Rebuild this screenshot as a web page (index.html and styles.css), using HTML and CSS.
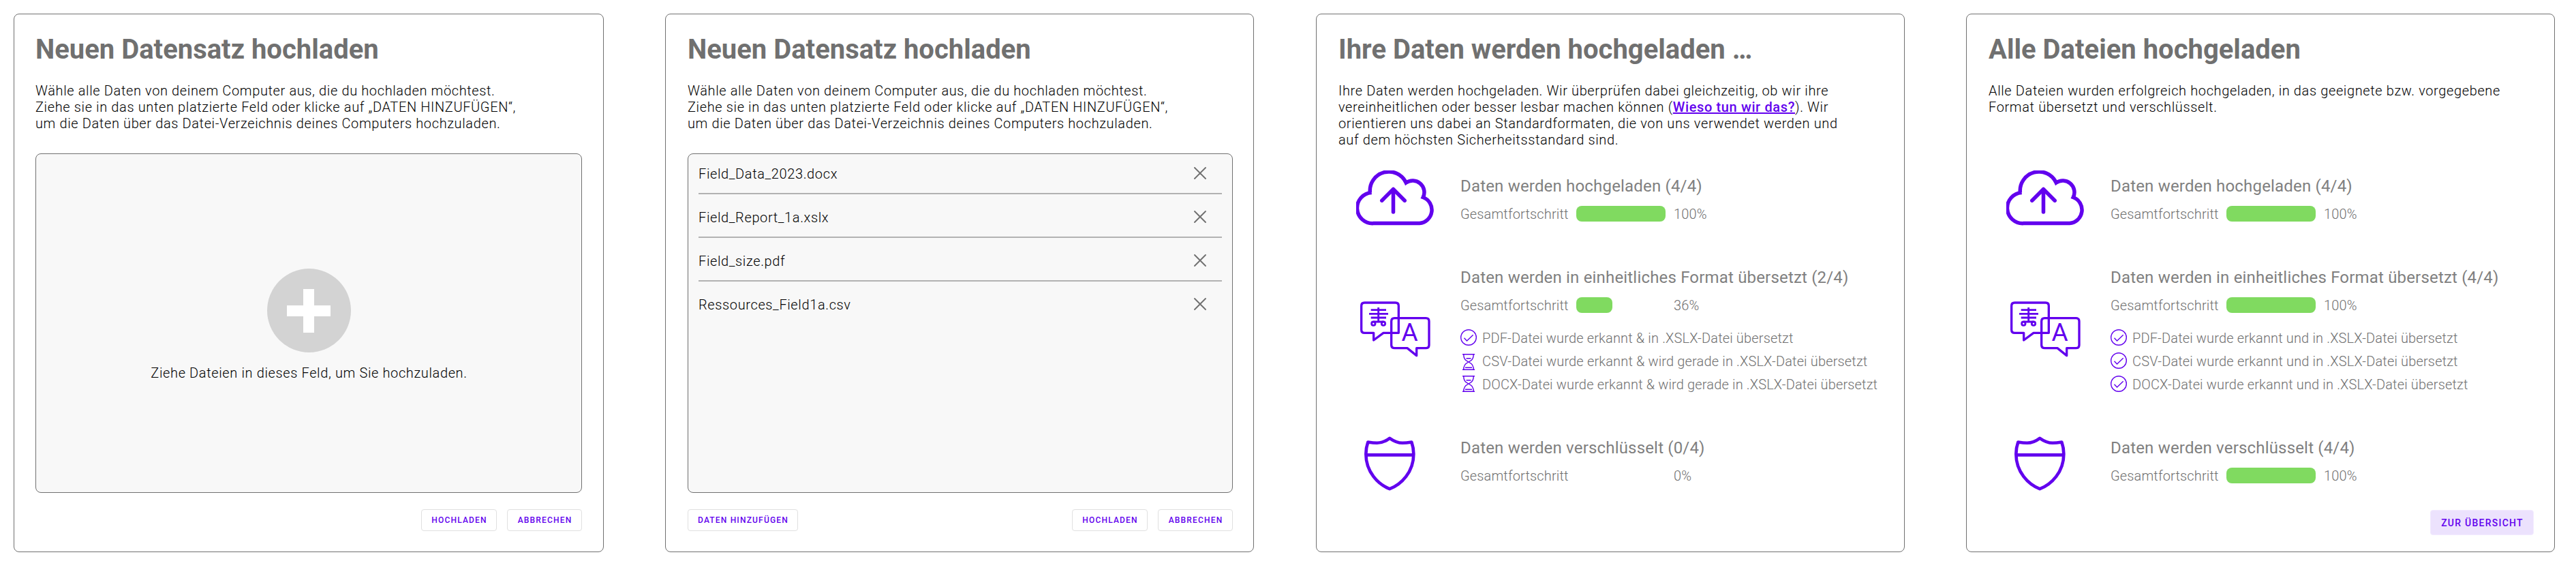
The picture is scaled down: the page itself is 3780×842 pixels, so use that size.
FILE: index.html
```
<!DOCTYPE html>
<html lang="de">
<head>
<meta charset="utf-8">
<title>Datensatz hochladen</title>
<link rel="stylesheet" href="styles.css">
</head>
<body>
<svg class="sprite" aria-hidden="true">
  <symbol id="close" viewBox="0 0 24 24"><path d="M4 3 20 19M20 3 4 19" fill="none" stroke="currentColor" stroke-width="1.9" stroke-linecap="round"/></symbol>
  <symbol id="cloud" viewBox="0 0 344 242">
    <g fill="none" stroke="currentColor" stroke-width="16.5">
      <path d="M61 97A83 83 0 0 1 219 54A51 51 0 0 1 294 118A59 59 0 0 1 278 232H76A67.5 67.5 0 0 1 68 97"/>
      <path d="M163 182V83M113 132 163 82 213 132" stroke-linecap="round" stroke-linejoin="round"/>
    </g>
  </symbol>
  <symbol id="translate" viewBox="0 0 309 246">
    <g fill="none" stroke="currentColor" stroke-width="10">
      <path d="M19 6H155Q169 6 169 20V139H102L59 171V139H19Q5 139 5 125V20Q5 6 19 6Z" stroke-linejoin="round"/>
      <path d="M151 74H289Q303 74 303 88V192Q303 206 289 206H248V239L207 206H151Q137 206 137 192V88Q137 74 151 74Z" stroke-linejoin="round"/>
      <g stroke-width="8.5"><path d="M80 27V90M47 38H114M39 55H123M47 72H114M58 90H103"/><circle cx="58" cy="98" r="8"/><circle cx="102" cy="98" r="8"/></g>
    </g>
    <text x="218" y="174" text-anchor="middle" font-size="111" fill="currentColor">A</text>
  </symbol>
  <symbol id="shield" viewBox="0 0 226 240">
    <path d="M112 8C96 20 78 29 56 29C40 29 28 27 16 25C10 42 7 60 7 78C7 158 62 213 112 232C163 213 218 158 218 78C218 60 215 42 209 25C197 27 185 29 169 29C147 29 129 20 112 8ZM7 82H218" fill="none" stroke="currentColor" stroke-width="14" stroke-linejoin="round"/>
  </symbol>
  <symbol id="check" viewBox="0 0 24 24"><g fill="none" stroke="currentColor" stroke-width="1.4"><circle cx="12" cy="12" r="11.3"/><path d="M5.5 12.8 9.5 17 18.7 8.3"/></g></symbol>
  <symbol id="hourglass" viewBox="0 0 18 24"><path d="M0 .7H18M0 23.3H18M1.7 .7C1.7 6 4 9.6 7.6 11.2Q9 12 7.6 12.8C4 14.4 1.7 18 1.7 23.3M16.3 .7C16.3 6 14 9.6 10.4 11.2Q9 12 10.4 12.8C14 14.4 16.3 18 16.3 23.3M5.5 6.7H12.5M4 20.3H14M7.6 12H10.4" fill="none" stroke="currentColor" stroke-width="1.4"/></symbol>
</svg>

<main class="board">
  <section class="card card-wide">
    <header class="head">
      <h1>Neuen Datensatz hochladen</h1>
      <p>Wähle alle Daten von deinem Computer aus, die du hochladen möchtest.<br>Ziehe sie in das unten platzierte Feld oder klicke auf „DATEN HINZUFÜGEN“,<br>um die Daten über das Datei-Verzeichnis deines Computers hochzuladen.</p>
    </header>
    <div class="panel drop">
      <svg class="plus" viewBox="0 0 123 123"><circle cx="61.5" cy="61.5" r="61.5" fill="#d3d3d3"/><path d="M53 30H69V54H93V70H69V94H53V70H29V54H53Z" fill="#fff"/></svg>
      <span class="hint">Ziehe Dateien in dieses Feld, um Sie hochzuladen.</span>
    </div>
    <footer class="actions">
      <button class="btn btn-upload push">HOCHLADEN</button>
      <button class="btn btn-cancel">ABBRECHEN</button>
    </footer>
  </section>

  <section class="card">
    <header class="head">
      <h1>Neuen Datensatz hochladen</h1>
      <p>Wähle alle Daten von deinem Computer aus, die du hochladen möchtest.<br>Ziehe sie in das unten platzierte Feld oder klicke auf „DATEN HINZUFÜGEN“,<br>um die Daten über das Datei-Verzeichnis deines Computers hochzuladen.</p>
    </header>
    <ul class="panel files">
      <li>Field_Data_2023.docx<svg class="close"><use href="#close"/></svg></li>
      <li>Field_Report_1a.xslx<svg class="close"><use href="#close"/></svg></li>
      <li>Field_size.pdf<svg class="close"><use href="#close"/></svg></li>
      <li>Ressources_Field1a.csv<svg class="close"><use href="#close"/></svg></li>
    </ul>
    <footer class="actions">
      <button class="btn btn-add">DATEN HINZUFÜGEN</button>
      <button class="btn btn-upload push">HOCHLADEN</button>
      <button class="btn btn-cancel">ABBRECHEN</button>
    </footer>
  </section>

  <section class="card">
    <header class="head head-steps">
      <h1>Ihre Daten werden hochgeladen …</h1>
      <p>Ihre Daten werden hochgeladen. Wir überprüfen dabei gleichzeitig, ob wir ihre<br>vereinheitlichen oder besser lesbar machen können (<a href="#">Wieso tun wir das?</a>). Wir<br>orientieren uns dabei an Standardformaten, die von uns verwendet werden und<br>auf dem höchsten Sicherheitsstandard sind.</p>
    </header>
    <div class="step step-upload">
      <svg class="cloud"><use href="#cloud"/></svg>
      <div class="body">
        <h2>Daten werden hochgeladen (4/4)</h2>
        <div class="progress"><span class="label">Gesamtfortschritt</span><span class="track"><span class="bar" style="width:100%"></span></span><span>100%</span></div>
      </div>
    </div>
    <div class="step step-format">
      <svg class="translate"><use href="#translate"/></svg>
      <div class="body">
        <h2>Daten werden in einheitliches Format übersetzt (2/4)</h2>
        <div class="progress"><span class="label">Gesamtfortschritt</span><span class="track"><span class="bar" style="width:40.5%"></span></span><span>36%</span></div>
        <ul class="states">
          <li><svg class="check"><use href="#check"/></svg>PDF-Datei wurde erkannt &amp; in .XSLX-Datei übersetzt</li>
          <li><svg class="hourglass"><use href="#hourglass"/></svg>CSV-Datei wurde erkannt &amp; wird gerade in .XSLX-Datei übersetzt</li>
          <li><svg class="hourglass raised"><use href="#hourglass"/></svg>DOCX-Datei wurde erkannt &amp; wird gerade in .XSLX-Datei übersetzt</li>
        </ul>
      </div>
    </div>
    <div class="step step-encrypt">
      <svg class="shield"><use href="#shield"/></svg>
      <div class="body">
        <h2>Daten werden verschlüsselt (0/4)</h2>
        <div class="progress"><span class="label">Gesamtfortschritt</span><span class="track"></span><span>0%</span></div>
      </div>
    </div>
  </section>

  <section class="card">
    <header class="head head-steps">
      <h1>Alle Dateien hochgeladen</h1>
      <p>Alle Dateien wurden erfolgreich hochgeladen, in das geeignete bzw. vorgegebene<br>Format übersetzt und verschlüsselt.</p>
    </header>
    <div class="step step-upload">
      <svg class="cloud"><use href="#cloud"/></svg>
      <div class="body">
        <h2>Daten werden hochgeladen (4/4)</h2>
        <div class="progress"><span class="label">Gesamtfortschritt</span><span class="track"><span class="bar" style="width:100%"></span></span><span>100%</span></div>
      </div>
    </div>
    <div class="step step-format">
      <svg class="translate"><use href="#translate"/></svg>
      <div class="body">
        <h2>Daten werden in einheitliches Format übersetzt (4/4)</h2>
        <div class="progress"><span class="label">Gesamtfortschritt</span><span class="track"><span class="bar" style="width:100%"></span></span><span>100%</span></div>
        <ul class="states">
          <li><svg class="check"><use href="#check"/></svg>PDF-Datei wurde erkannt und in .XSLX-Datei übersetzt</li>
          <li><svg class="check"><use href="#check"/></svg>CSV-Datei wurde erkannt und in .XSLX-Datei übersetzt</li>
          <li><svg class="check"><use href="#check"/></svg>DOCX-Datei wurde erkannt und in .XSLX-Datei übersetzt</li>
        </ul>
      </div>
    </div>
    <div class="step step-encrypt">
      <svg class="shield"><use href="#shield"/></svg>
      <div class="body">
        <h2>Daten werden verschlüsselt (4/4)</h2>
        <div class="progress"><span class="label">Gesamtfortschritt</span><span class="track"><span class="bar" style="width:100%"></span></span><span>100%</span></div>
      </div>
    </div>
    <footer class="finish"><button class="btn btn-overview push">ZUR ÜBERSICHT</button></footer>
  </section>
</main>
</body>
</html>
```
FILE: styles.css
```
* { box-sizing: border-box; margin: 0; padding: 0; }
body { background: #fff; font-family: Roboto, sans-serif; color: #000; }
ul { list-style: none; }
svg { flex: none; display: block; }
.sprite { display: none; }

.board { display: flex; padding: 20px 31px 0 20px; height: 842px; }
.card {
  display: flex; flex-direction: column; flex: none;
  width: 864px; height: 790px; margin-right: 90px; padding: 28px 30px 24px 32px;
  border: 1px solid #707070; border-radius: 8px;
}
.card:nth-child(2) { margin-right: 91px; }
.card:last-child { margin-right: 0; }
.card-wide { width: 866px; padding-left: 31px; padding-right: 31px; }

.head { height: 176px; }
.head-steps { height: 201px; }
h1 { font-size: 40px; line-height: 48px; font-weight: 700; color: #707070; }
.head p { margin-top: 24px; }
.head p, .panel { font-size: 20px; line-height: 24px; font-weight: 300; letter-spacing: .625px; white-space: nowrap; }
.head a { color: #6200ee; font-weight: 500; }

.panel { height: 498px; background: #f8f8f8; border: 1px solid #707070; border-radius: 8px; }
.drop { display: flex; flex-direction: column; align-items: center; padding-top: 168px; gap: 18px; }
.plus { width: 123px; height: 123px; }
.hint { padding-left: 1px; }

.files { padding: 0 15px; }
.files li {
  display: flex; align-items: flex-end; justify-content: space-between;
  height: 64px; padding: 0 20px 16px 0; border-bottom: 2px solid #b2b2b2;
}
.files li:first-child { height: 59px; }
.files li:last-child { border-bottom: 0; height: 62px; }
.close { width: 24px; height: 24px; color: #707070; }

.actions, .finish { display: flex; gap: 15px; }
.actions { margin-top: 24px; }
.finish { margin-top: auto; }
.push { margin-left: auto; }
.btn {
  height: 32px; border: 1px solid #e0e0e0; border-radius: 4px; background: #fff; color: #6200ee;
  font: 500 12px/30px Roboto, sans-serif; letter-spacing: 1.18px; text-indent: 1px; text-align: center; white-space: nowrap;
}
.btn-upload { width: 111px; }
.btn-cancel { width: 110px; }
.btn-add { width: 162px; }
.btn-overview { width: 152px; height: 37px; font-size: 14px; letter-spacing: 1.25px; background: #ece2fd; border-color: #f2ebfe; }

.step { display: grid; grid-template-columns: 179px 1fr; align-items: start; color: #707070; }
.step > svg { color: #6200ee; }
.step-upload { height: 143px; }
.step-upload .body { padding-top: 9px; }
.step-format { height: 247px; }
.step-encrypt .body { padding-top: 3px; }
.cloud { width: 115px; height: 81px; margin-left: 26px; }
.translate { width: 103px; height: 82px; margin: 49px 0 0 32px; }
.shield { width: 75px; height: 80px; margin-left: 38px; }
h2 { font-size: 24px; line-height: 28px; font-weight: 400; letter-spacing: .18px; color: #808080; white-space: nowrap; }
.progress { display: flex; margin-top: 15px; }
.progress, .states { font-size: 20px; line-height: 24px; font-weight: 300; letter-spacing: .15px; white-space: nowrap; }
.label { width: 170px; }
.track { width: 131px; height: 23px; margin-right: 12px; }
.bar { display: block; height: 23px; border-radius: 8px; background: #80da60; }
.states { display: grid; gap: 10px; margin-top: 24px; }
.states li { display: flex; height: 24px; }
.states svg { color: #6200ee; }
.check { width: 24px; height: 24px; margin: -1px 8px 0 0; }
.hourglass { width: 18px; height: 24px; margin: 1px 11px 0 3px; }
.raised { margin-top: -1px; }
```
